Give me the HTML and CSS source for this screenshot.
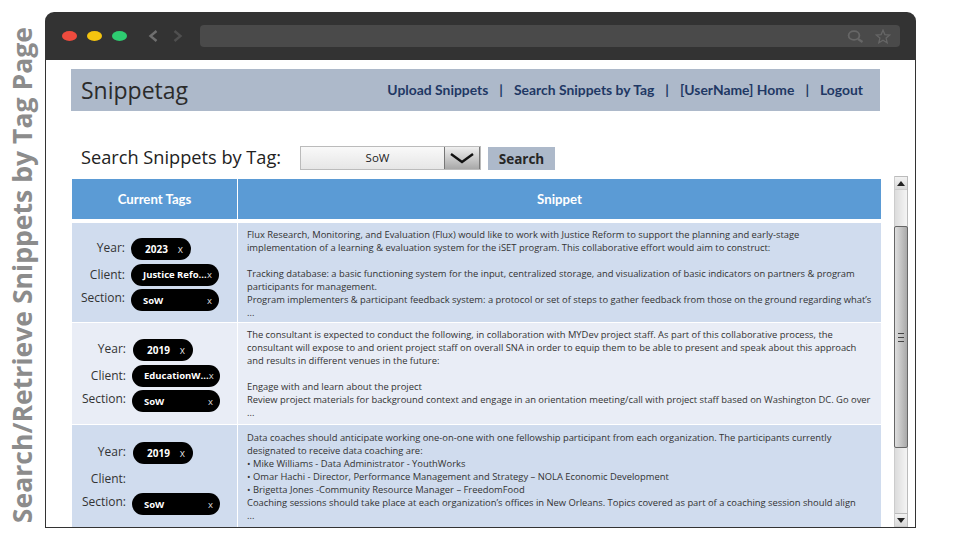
FILE: index.html
```html
<!doctype html>
<html>

<head>

<title>Search/Retrieve Snippets by Tag Page</title>

<meta name=viewport content="width=device-width, initial-scale=1">

<link rel="stylesheet" href="styles.css">

</head>

<body>

<div class=side-label><span>Search/Retrieve Snippets by Tag Page</span></div>

<div class=window>

<div class=titlebar>
    <span class="dot red"></span>
    <span class="dot yellow"></span>
    <span class="dot green"></span>
    <svg class=nav-arrow width=10 height=12 viewBox="0 0 10 12"><path d="M8.5 1 L2.5 6 L8.5 11" fill=none stroke="#6f6f6f" stroke-width=2.4 /></svg>
    <svg class=nav-arrow width=10 height=12 viewBox="0 0 10 12"><path d="M1.5 1 L7.5 6 L1.5 11" fill=none stroke="#4f4f4f" stroke-width=2.4 /></svg>
    <div class=urlbar>
        <svg width=17 height=13 viewBox="0 0 17 13"><ellipse cx=7 cy=5.5 rx=5.4 ry=4.3 fill=none stroke="#666" stroke-width=1.8 /><path d="M11 9 L15.5 12" stroke="#666" stroke-width=2.2 /></svg>
        <svg width=16 height=15 viewBox="0 0 16 15"><path d="M8 1.2 L9.9 5.6 L14.8 6 L11.1 9.1 L12.2 13.8 L8 11.3 L3.8 13.8 L4.9 9.1 L1.2 6 L6.1 5.6 Z" fill=none stroke="#666" stroke-width=1.3 /></svg>
    </div>
</div>

<div class=page>

<div class=topbar>
    <div class=brand>Snippetag</div>
    <div class=links>
        <a>Upload Snippets</a><span>|</span>
        <a>Search Snippets by Tag</a><span>|</span>
        <a>[UserName] Home</a><span>|</span>
        <a>Logout</a>
    </div>
</div>

<div class=search-row>
    <div class=search-label>Search Snippets by Tag:</div>
    <div class=select>
        <div class=select-value>SoW</div>
        <div class=select-btn>
            <svg width=28 height=11 viewBox="0 0 28 11"><path d="M3 1 L14 9 L25 1" fill=none stroke="#111" stroke-width=2.4 /></svg>
        </div>
    </div>
    <div class=search-btn>Search</div>
</div>

<div class=results>

<div class=grid>
    <div class=head>Current Tags</div>
    <div class=head>Snippet</div>

    <div class="tags dark">
        <div class=lbl>Year:</div><div class="pill short"><b>2023</b><i>x</i></div>
        <div class=lbl>Client:</div><div class=pill><b>Justice Refo...</b><i>x</i></div>
        <div class=lbl>Section:</div><div class=pill><b>SoW</b><i>x</i></div>
    </div>
    <div class="snippet dark">
        Flux Research, Monitoring, and Evaluation (Flux) would like to work with Justice Reform to support the planning and early-stage<br>
        implementation of a learning &amp; evaluation system for the iSET program. This collaborative effort would aim to construct:<br>
        <br>
        Tracking database: a basic functioning system for the input, centralized storage, and visualization of basic indicators on partners &amp; program<br>
        participants for management.<br>
        Program implementers &amp; participant feedback system: a protocol or set of steps to gather feedback from those on the ground regarding what’s<br>
        ...
    </div>

    <div class="tags light shifted">
        <div class=lbl>Year:</div><div class="pill short"><b>2019</b><i>x</i></div>
        <div class=lbl>Client:</div><div class=pill><b>EducationW...</b><i>x</i></div>
        <div class=lbl>Section:</div><div class=pill><b>SoW</b><i>x</i></div>
    </div>
    <div class="snippet light">
        The consultant is expected to conduct the following, in collaboration with MYDev project staff. As part of this collaborative process, the<br>
        consultant will expose to and orient project staff on overall SNA in order to equip them to be able to present and speak about this approach<br>
        and results in different venues in the future:<br>
        <br>
        Engage with and learn about the project<br>
        Review project materials for background context and engage in an orientation meeting/call with project staff based on Washington DC. Go over<br>
        ...
    </div>

    <div class="tags dark shifted">
        <div class=lbl>Year:</div><div class="pill short"><b>2019</b><i>x</i></div>
        <div class=lbl>Client:</div><div></div>
        <div class=lbl>Section:</div><div class=pill><b>SoW</b><i>x</i></div>
    </div>
    <div class="snippet dark last">
        Data coaches should anticipate working one-on-one with one fellowship participant from each organization. The participants currently<br>
        designated to receive data coaching are:<br>
        • Mike Williams - Data Administrator - YouthWorks<br>
        • Omar Hachi - Director, Performance Management and Strategy – NOLA Economic Development<br>
        • Brigetta Jones -Community Resource Manager – FreedomFood<br>
        Coaching sessions should take place at each organization’s offices in New Orleans. Topics covered as part of a coaching session should align<br>
        ...
    </div>
</div>

<div class=scrollbar>
    <div class=scroll-btn><span class=arrow-up></span></div>
    <div class=scroll-gap></div>
    <div class=thumb><span class=grip></span></div>
    <div class=scroll-fill></div>
    <div class=scroll-btn><span class=arrow-down></span></div>
</div>

</div>

</div>

</div>

</body>
</html>
```

FILE: styles.css
```css
html, body {
    margin: 0;
    height: 540px;
    overflow: hidden;
}
body {
    display: flex;
    background-color: white;
    font-family: "Open Sans", sans-serif;
    color: #333;
}

.side-label {
    width: 45px;
    height: 540px;
    display: flex;
    align-items: center;
    justify-content: center;
}
.side-label span {
    writing-mode: vertical-rl;
    transform: rotate(180deg);
    white-space: nowrap;
    font-size: 26.6px;
    font-weight: 700;
    color: #8c8c8c;
    margin-top: 11px;
    margin-right: 1px;
}

.window {
    width: 871px;
    height: 516px;
    margin-top: 12px;
}

.titlebar {
    height: 48px;
    box-sizing: border-box;
    background-color: #333;
    border-radius: 9px 9px 0 0;
    padding-left: 17px;
    padding-right: 16px;
    display: flex;
    align-items: center;
}
.dot {
    width: 15px;
    height: 10px;
    border-radius: 50%;
    margin-right: 10px;
}
.red { background-color: #ee4b3e; }
.yellow { background-color: #f4c40f; }
.green { background-color: #2ecc71; }
.nav-arrow {
    margin-left: 11px;
    margin-right: 4px;
}
.urlbar {
    flex: 1;
    height: 22px;
    margin-left: 13px;
    border-radius: 4px;
    background-color: #4a4a4a;
    display: flex;
    align-items: center;
    justify-content: flex-end;
    gap: 11px;
    padding-right: 9px;
}

.page {
    height: 468px;
    box-sizing: border-box;
    border-left: 1px solid #333;
    border-right: 1px solid #333;
    border-bottom: 1px solid #333;
    padding-top: 9px;
    padding-left: 25px;
    overflow: hidden;
}

.topbar {
    width: 809px;
    height: 42px;
    background-color: #adb9ca;
    display: flex;
    align-items: center;
    justify-content: space-between;
    padding-left: 10px;
    padding-right: 17px;
    box-sizing: border-box;
}
.brand {
    font-size: 23px;
    color: #2b2b2b;
}
.links {
    font-family: "Lato", sans-serif;
    font-size: 13.9px;
    font-weight: 700;
    color: #1f3864;
    display: flex;
    gap: 11px;
    padding-bottom: 1px;
}

.search-row {
    display: flex;
    align-items: center;
    margin-top: 35px;
    height: 24px;
    padding-left: 10px;
}
.search-label {
    font-size: 18.2px;
    color: #222;
    width: 219px;
    white-space: nowrap;
    margin-top: -3px;
}
.select {
    display: flex;
    width: 181px;
    height: 24px;
    box-sizing: border-box;
    border: 1px solid #bbb;
}
.select-value {
    width: 143px;
    box-sizing: border-box;
    padding-left: 10px;
    font-size: 11.5px;
    text-align: center;
    line-height: 22px;
    color: #222;
    background: linear-gradient(#f9f9f9, #e6e6e6);
}
.select-btn {
    flex: 1;
    border-left: 1px solid #777;
    border-right: 1px solid #777;
    display: flex;
    align-items: center;
    justify-content: center;
    background: linear-gradient(#efefef, #a8a8a8);
}
.search-btn {
    width: 67px;
    height: 23px;
    margin-left: 7px;
    background-color: #adb9ca;
    font-size: 13.5px;
    font-weight: 700;
    line-height: 24px;
    text-align: center;
    color: #262626;
}

.results {
    display: flex;
    margin-top: 9px;
    padding-left: 1px;
}
.grid {
    width: 809px;
    display: grid;
    grid-template-columns: 165px 643px;
    grid-template-rows: 43px 99px 101px 102px;
    column-gap: 1px;
    row-gap: 1px;
}
.head {
    background-color: #5b9bd5;
    color: white;
    font-family: "Lato", sans-serif;
    font-size: 13.2px;
    font-weight: 700;
    line-height: 40px;
    text-align: center;
    height: 40px;
}
.dark { background-color: #d0dcee; }
.light { background-color: #e9edf6; }

.tags {
    display: grid;
    grid-template-columns: 53px 90px;
    grid-auto-rows: 22px;
    row-gap: 3.5px;
    column-gap: 6px;
    align-content: center;
    padding-top: 4px;
    font-size: 12px;
    color: #333;
}
.shifted { padding-left: 1px; padding-top: 5px; }
.shifted.light { padding-top: 4px; }
.shifted .short { margin-left: 1px; }
.lbl {
    text-align: right;
    line-height: 20px;
    white-space: nowrap;
}
.lbl:nth-child(3) { line-height: 22px; }
.lbl:nth-child(5) { line-height: 17px; }
.pill {
    height: 22px;
    width: 88px;
    border-radius: 11px;
    background-color: black;
    color: white;
    font-size: 9.5px;
    display: flex;
    align-items: center;
    justify-content: space-between;
    padding-left: 12px;
    padding-right: 7px;
    box-sizing: border-box;
    white-space: nowrap;
}
.pill b {
    font-weight: 700;
}
.pill i {
    font-style: normal;
    color: #ddd;
}
.short {
    width: 60px;
    padding-left: 14px;
    padding-right: 8px;
    font-size: 10px;
}

.snippet {
    padding-left: 9px;
    padding-top: 5px;
    font-size: 9.4px;
    line-height: 13px;
    white-space: nowrap;
    overflow: hidden;
    color: #333;
}
.last { padding-top: 6px; }

.scrollbar {
    width: 14px;
    height: 351px;
    margin-left: 13px;
    margin-top: -3px;
    display: flex;
    flex-direction: column;
    border-left: 1px solid #ccc;
    border-right: 1px solid #bbb;
    box-sizing: border-box;
    background: linear-gradient(to right, #dcdcdc, #f4f4f4);
}
.scroll-btn {
    height: 14px;
    display: flex;
    align-items: center;
    justify-content: center;
    background: linear-gradient(#f2f2f2, #d9d9d9);
    border-top: 1px solid #bbb;
    border-bottom: 1px solid #ccc;
    box-sizing: border-box;
}
.arrow-up {
    border-left: 4px solid transparent;
    border-right: 4px solid transparent;
    border-bottom: 5px solid #222;
}
.arrow-down {
    border-left: 4px solid transparent;
    border-right: 4px solid transparent;
    border-top: 5px solid #222;
}
.scroll-gap { height: 36px; }
.scroll-fill { flex: 1; }
.thumb {
    height: 222px;
    margin-left: -1px;
    margin-right: -1px;
    border: 1px solid #666;
    border-radius: 2px;
    box-sizing: border-box;
    background: linear-gradient(to right, #dedede, #a9a9a9);
    display: flex;
    align-items: center;
    justify-content: center;
}
.grip {
    width: 6px;
    height: 7px;
    border-top: 1px solid #444;
    border-bottom: 1px solid #444;
    background: linear-gradient(#444, #444) center / 100% 1px no-repeat;
}
```
